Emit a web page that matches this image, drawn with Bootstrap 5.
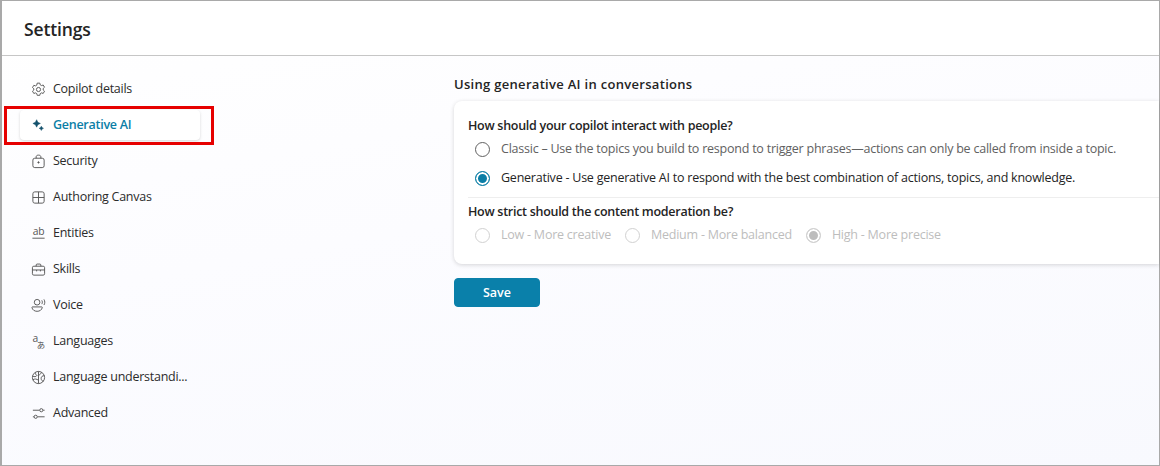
<!DOCTYPE html>
<html lang="en">
<head>
    <meta charset="UTF-8">
    <title>Settings</title>
    <link href="https://cdn.jsdelivr.net/npm/bootstrap@5.3.3/dist/css/bootstrap.min.css" rel="stylesheet">
    <style>
        html, body { height: 100%; }
        body {
            font-family: "Open Sans", "Noto Sans", sans-serif;
            font-size: 12.5px;
            color: #242424;
            overflow: hidden;
            background: #fff;
        }
        .shot-frame {
            height: 466px;
            border: 1px solid #a9a9a9;
            border-left-width: 2px;
            background: linear-gradient(170deg, #fff 0%, #fcfcff 45%, #f8f9fe 100%);
        }
        .page-head {
            height: 55px;
            padding: 2px 0 0 22px;
            border-bottom: 1px solid #c6c6c6;
            background: #fff;
            font-size: 17.5px;
            font-weight: 600;
            letter-spacing: -.15px;
        }
        .side-col { width: 452px; padding: 18px 0 0 18px; flex: none; }
        .side-link {
            height: 30px;
            width: 180px;
            margin-bottom: 6px;
            padding: 1px 0 0 11px;
            gap: 7px;
            color: #2b2b2b;
            text-decoration: none;
            white-space: nowrap;
            border-radius: 4px;
            position: relative;
            letter-spacing: -.26px;
        }
        .side-link svg { width: 15px; height: 15px; flex: none; fill: none; stroke: #555; stroke-width: 1; overflow: visible; }
        .side-link svg text { fill: #555; stroke: none; }
        .side-link.is-active { background: #fff; color: #0b7ea6; font-weight: 600; box-shadow: 0 1px 3px rgba(0,0,0,.16); }
        .side-link.is-active svg { fill: #12506b; stroke: #12506b; stroke-width: .5; stroke-linejoin: round; }
        .side-link.is-active::after {
            content: "";
            position: absolute;
            left: -16px; top: -4px; right: -14px; bottom: -5px;
            border: 3px solid #e60000;
        }
        .main-col { flex: 1; padding-top: 19px; min-width: 0; }
        .sect-title { font-size: 13px; font-weight: 600; margin: 0 0 8px; line-height: 18px; color: #242424; letter-spacing: .3px; }
        .opt-card {
            height: 163px;
            background: #fff;
            border-radius: 8px 0 0 8px;
            box-shadow: 0 1px 4px rgba(0,0,0,.16);
            padding-top: 16px;
        }
        .q-label { font-size: 12.5px; font-weight: 600; line-height: 18px; padding-left: 14px; letter-spacing: -.28px; }
        .q-gap { margin-top: 5px; }
        .opt-row { padding-left: 21px; height: 29px; gap: 11px; letter-spacing: -.23px; white-space: nowrap; }
        .opt-row .form-check-input { width: 15px; height: 15px; margin: 0; flex: none; border-color: #616161; background-color: #fff; }
        .opt-row .form-check-input:checked { background-color: #0b7ea6; border-color: #0b7ea6; box-shadow: inset 0 0 0 2px #fff; background-image: none; }
        .opt-muted { color: #616161; }
        .opt-off { color: #bdbdbd; gap: 14px; }
        .opt-off .opt-row + .opt-row { padding-left: 0; }
        .opt-off .form-check-input, .opt-off .form-check-input:disabled { border-color: #d1d1d1; opacity: 1; }
        .opt-off .form-check-input:checked { background-color: #bdbdbd; border-color: #d1d1d1; }
        .opt-rule { border-top: 1px solid #eee; margin: 4px 0 0 14px; }
        .save-btn {
            width: 86px;
            height: 29px;
            padding: 2px 0 0;
            margin-top: 14px;
            font-size: 12.5px;
            font-weight: 600;
            border-radius: 4px;
            background: #0a80aa;
            border-color: #0a80aa;
            color: #fff;
        }
    </style>
</head>
<body>
    <div class="shot-frame d-flex flex-column">
        <div class="page-head d-flex align-items-center">Settings</div>
        <div class="d-flex flex-grow-1">
            <nav class="side-col d-flex flex-column">
                <a class="side-link d-flex align-items-center" href="#">
                    <svg viewBox="0 0 16 16"><circle cx="8" cy="8" r="2.2"/><path d="M6.6 1.2h2.800l.4 1.800 1.400.8 1.800-.6 1.400 2.400-1.400 1.300v1.600l1.400 1.300-1.400 2.400-1.800-.6-1.400.8-.4 1.800H6.600l-.4-1.800-1.400-.8-1.800.6-1.400-2.400 1.400-1.300V7.200L1.600 5.900 3 3.500l1.800.6 1.400-.8z"/></svg>
                    Copilot details</a>
                <a class="side-link is-active d-flex align-items-center" href="#">
                    <svg viewBox="0 0 16 16"><path d="M6 1.800l1.300 2.700 2.700 1.300-2.700 1.300L6 9.800 4.700 7.100 2 5.800l2.700-1.300z"/><path d="M11 8.700l.8 1.500 1.500.8-1.500.8-.8 1.500-.8-1.500-1.500-.8 1.500-.8z"/></svg>
                    Generative AI</a>
                <a class="side-link d-flex align-items-center" href="#">
                    <svg viewBox="0 0 16 16"><rect x="2" y="4.500" width="12" height="10" rx="2"/><path d="M5.500 4.500V3C5.500 1.800 6.500 1.200 8 1.200s2.500.6 2.500 1.800v1.500"/><circle cx="8" cy="9" r=".7" fill="#555"/></svg>
                    Security</a>
                <a class="side-link d-flex align-items-center" href="#">
                    <svg viewBox="0 0 16 16"><rect x="2" y="2" width="12" height="12" rx="2"/><path d="M8 2v12M2 8h12"/></svg>
                    Authoring Canvas</a>
                <a class="side-link d-flex align-items-center" href="#">
                    <svg viewBox="0 0 16 16"><text x="8" y="10" text-anchor="middle" font-size="11" font-family="Open Sans, sans-serif">ab</text><path d="M1.500 13h13"/></svg>
                    Entities</a>
                <a class="side-link d-flex align-items-center" href="#">
                    <svg viewBox="0 0 16 16"><rect x="1.500" y="4.500" width="13" height="9.500" rx="1.500"/><path d="M5.500 4.500V3.200c0-.6.4-1 1-1h3c.6 0 1 .4 1 1v1.300M1.500 8.500h13M6 8.500v1.500M10 8.500v1.500"/></svg>
                    Skills</a>
                <a class="side-link d-flex align-items-center" href="#">
                    <svg viewBox="0 0 16 16"><circle cx="6.500" cy="4.500" r="3"/><path d="M1.500 9.500h10c.4 0 .6.300.5.700-.4 2.500-2.800 4-5.500 4s-5-1.500-5.500-4c-.1-.4.1-.7.5-.7zM11.500 2.500c.8 1.200.8 2.800 0 4M13.800 1.500c1.200 1.800 1.200 4.200 0 6"/></svg>
                    Voice</a>
                <a class="side-link d-flex align-items-center" href="#">
                    <svg viewBox="0 0 16 16"><text x="1.500" y="8.500" font-size="11" font-family="Open Sans, sans-serif">a</text><text x="6" y="14.500" font-size="9" font-family="Noto Sans CJK JP, sans-serif">あ</text></svg>
                    Languages</a>
                <a class="side-link d-flex align-items-center" href="#">
                    <svg viewBox="0 0 16 16"><circle cx="8" cy="8" r="6.500"/><path d="M8 1.500v13M1.700 6.500c2 1 3.500 1 5-1M14.300 6c-2 0-3.500 1-3.500 3s1.500 3 2.500 3M2 10.500c2-1.500 4-1 6 .5M5 2.500c-.5 2 .5 3 1 3M11 2.500c-.5 1.500-1 2.500-3 3"/></svg>
                    Language understandi...</a>
                <a class="side-link d-flex align-items-center" href="#">
                    <svg viewBox="0 0 16 16"><path d="M2 4.500h7M13 4.500h1.500M2 11.500h1M7 11.500h7.500"/><circle cx="11" cy="4.500" r="1.700"/><circle cx="5" cy="11.500" r="1.700"/></svg>
                    Advanced</a>
            </nav>
            <main class="main-col">
                <h2 class="sect-title">Using generative AI in conversations</h2>
                <div class="opt-card">
                    <div class="q-label">How should your copilot interact with people?</div>
                    <label class="opt-row opt-muted d-flex align-items-center">
                        <input class="form-check-input" type="radio" name="mode">
                        Classic – Use the topics you build to respond to trigger phrases—actions can only be called from inside a topic.
                    </label>
                    <label class="opt-row d-flex align-items-center">
                        <input class="form-check-input" type="radio" name="mode" checked>
                        Generative - Use generative AI to respond with the best combination of actions, topics, and knowledge.
                    </label>
                    <div class="opt-rule"></div>
                    <div class="q-label q-gap">How strict should the content moderation be?</div>
                    <div class="d-flex opt-off">
                        <label class="opt-row d-flex align-items-center">
                            <input class="form-check-input" type="radio" name="strict" disabled> Low - More creative
                        </label>
                        <label class="opt-row d-flex align-items-center">
                            <input class="form-check-input" type="radio" name="strict" disabled> Medium - More balanced
                        </label>
                        <label class="opt-row d-flex align-items-center">
                            <input class="form-check-input" type="radio" name="strict" checked disabled> High - More precise
                        </label>
                    </div>
                </div>
                <button type="button" class="btn save-btn d-block">Save</button>
            </main>
        </div>
    </div>
    <script src="https://cdn.jsdelivr.net/npm/bootstrap@5.3.3/dist/js/bootstrap.bundle.min.js"></script>
</body>
</html>
